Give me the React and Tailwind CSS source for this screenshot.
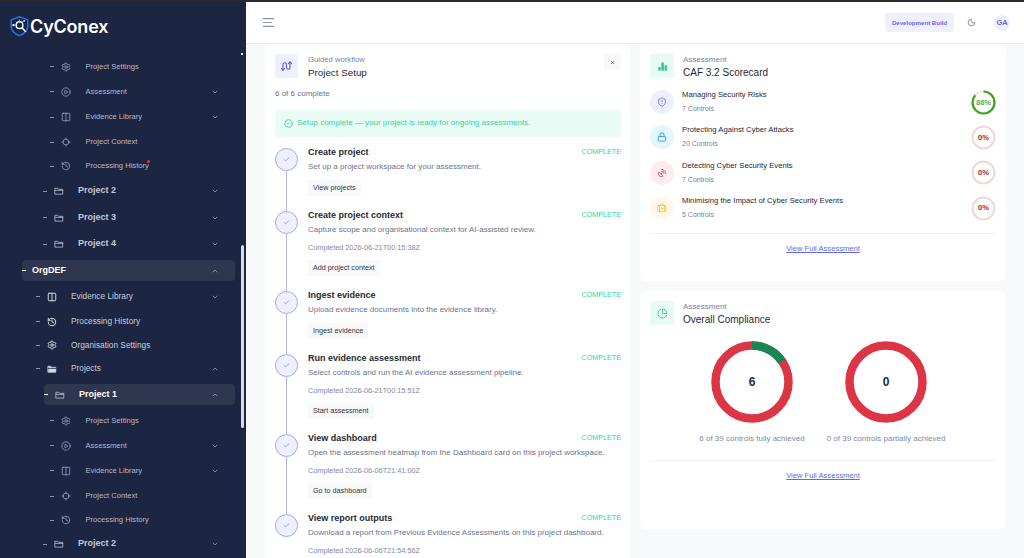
import {
  Check,
  ChevronDown,
  ChevronUp,
  CircleCheck,
  CirclePlay,
  ChartPie,
  Columns2,
  History,
  Locate,
  Lock,
  Moon,
  SatelliteDish,
  Settings,
  ShieldAlert,
  BriefcaseMedical,
  X,
} from "lucide-react";

function FolderIcon({ className, filled }) {
  return (
    <svg viewBox="0 0 24 24" className={className} fill={filled ? "currentColor" : "none"} stroke="currentColor" strokeWidth="2" strokeLinejoin="round" strokeLinecap="round">
      <path d="M3 5.500h6l2 2.500h10v11.500H3z" />
      <path d="M3 10.500h18" stroke={filled ? "#1c2541" : "currentColor"} />
    </svg>
  );
}

function FilledFolder(props) {
  return <FolderIcon {...props} filled />;
}

function BarsIcon({ className }) {
  return (
    <svg viewBox="0 0 24 24" className={className} fill="currentColor">
      <rect x="3" y="13" width="5" height="8" rx="1" />
      <rect x="9.500" y="3" width="5.500" height="18" rx="1" />
      <rect x="16.500" y="9" width="5" height="12" rx="1" />
    </svg>
  );
}

function Logo() {
  return (
    <svg viewBox="0 0 24 24" className="w-[21px] h-[22px] shrink-0" fill="none">
      <path d="M12 1.500 21.500 5v7c0 5.500-4 9-9.500 11C6.500 21 2.500 17.500 2.500 12V5z" fill="#10264f" stroke="#2a6fd8" strokeWidth="1.800" strokeLinejoin="round" />
      <circle cx="12" cy="11" r="3.800" stroke="#fff" strokeWidth="1.600" />
      <path d="m15 14 4 4.500" stroke="#fff" strokeWidth="1.800" />
      <path d="M8 11H5M12 7V4.500M15 8l2-2" stroke="#8fb6f5" strokeWidth="1.200" />
      <circle cx="5" cy="11" r="1.200" fill="#fff" />
      <circle cx="17.500" cy="6" r="1" fill="#cfe0ff" />
    </svg>
  );
}

const levelPad = {
  1: "pl-[36px]",
  2: "pl-[43px]",
  3: "pl-[50px]",
};

function NavRow({ level, icon: Icon, label, chevron, active, dot, height, pill }) {
  const textClass =
    level === 0
      ? "text-[9px] font-bold text-white ml-[6px]"
      : level === 2
        ? `text-[9px] font-bold ml-[12px] ${active ? "text-white" : "text-[#c3c8d6]"}`
        : level === 1
          ? "text-[8.300px] text-[#c9cedb] ml-[12px]"
          : "text-[7.600px] text-[#b5bbcc] ml-[12.500px]";
  const iconClass = level === 1 ? "text-[#d4d8e3]" : "text-[#b5bbcc]";

  return (
    <div className={`flex items-center ${height} ${pill ? "" : levelPad[level]}`}>
      <span className={`w-[4px] h-px ${active || level === 0 ? "bg-white" : "bg-[#8d94aa]"} shrink-0`} />
      {Icon && (
        <span className="ml-[4px] w-[15px] flex justify-center shrink-0">
          <Icon className={`w-[10px] h-[10px] ${iconClass}`} strokeWidth={level === 1 ? 2.400 : 1.600} />
        </span>
      )}
      <span className={`relative whitespace-nowrap ${textClass}`}>
        {label}
        {dot && <span className="absolute -right-[1px] top-0 w-[3px] h-[3px] rounded-full bg-red-500" />}
      </span>
      {chevron && (
        <span className={`ml-auto ${pill ? "pr-[16px]" : "pr-[19px]"}`}>
          {chevron === "up" ? (
            <ChevronUp className="w-[8px] h-[8px] text-[#aeb4c6]" />
          ) : (
            <ChevronDown className="w-[8px] h-[8px] text-[#aeb4c6]" />
          )}
        </span>
      )}
    </div>
  );
}

const steps = [
  { title: "Create project", desc: "Set up a project workspace for your assessment.", action: "View projects" },
  { title: "Create project context", desc: "Capture scope and organisational context for AI-assisted review.", done: "Completed 2026-06-21T00:15:38Z", action: "Add project context" },
  { title: "Ingest evidence", desc: "Upload evidence documents into the evidence library.", action: "Ingest evidence" },
  { title: "Run evidence assessment", desc: "Select controls and run the AI evidence assessment pipeline.", done: "Completed 2026-06-21T00:15:51Z", action: "Start assessment" },
  { title: "View dashboard", desc: "Open the assessment heatmap from the Dashboard card on this project workspace.", done: "Completed 2026-06-06T21:41:00Z", action: "Go to dashboard" },
  { title: "View report outputs", desc: "Download a report from Previous Evidence Assessments on this project dashboard.", done: "Completed 2026-06-06T21:54:56Z" },
];

function Step({ step, last }) {
  return (
    <div className={`flex ${step.done ? "h-[80px]" : "h-[63px]"} shrink-0`}>
      <div className="w-[23px] flex flex-col items-center shrink-0">
        <div className="w-[23px] h-[23px] rounded-full border border-[#a5a8ee] bg-[#eef0fd] flex items-center justify-center shrink-0">
          <Check className="w-[7px] h-[7px] text-[#6366f1]" />
        </div>
        {!last && <div className="w-px flex-1 bg-[#b4b7ef]" />}
      </div>
      <div className="ml-[10px] flex-1 min-w-0">
        <div className="flex justify-between items-start h-[12px] -mt-[2px]">
          <span className="text-[9px] leading-[12px] font-bold text-[#1f2937]">{step.title}</span>
          <span className="text-[7.200px] leading-[12px] text-[#34d3a0]">COMPLETE</span>
        </div>
        <p className="text-[8px] leading-[12px] text-[#6b7390] mt-[3px] whitespace-nowrap">{step.desc}</p>
        {step.done && <p className="text-[7.300px] leading-[10px] text-[#8189a3] mt-[7px]">{step.done}</p>}
        {step.action && (
          <div className={`inline-flex items-center h-[16px] px-[5px] rounded-[2px] bg-[#f8f8f9] text-[7.200px] text-[#303645] ${step.done ? "mt-[6px]" : "mt-[7px]"}`}>
            {step.action}
          </div>
        )}
      </div>
    </div>
  );
}

const domains = [
  { name: "Managing Security Risks", controls: "7 Controls", pct: 86, icon: ShieldAlert, bg: "bg-[#eeeffd]", color: "text-[#6366f1]" },
  { name: "Protecting Against Cyber Attacks", controls: "20 Controls", pct: 0, icon: Lock, bg: "bg-[#e5f5fd]", color: "text-[#1d9bd8]" },
  { name: "Detecting Cyber Security Events", controls: "7 Controls", pct: 0, icon: SatelliteDish, bg: "bg-[#fdecee]", color: "text-[#e2475a]" },
  { name: "Minimising the Impact of Cyber Security Events", controls: "5 Controls", pct: 0, icon: BriefcaseMedical, bg: "bg-[#fff8ea]", color: "text-[#f2c14e]" },
];

function Ring({ pct }) {
  const c = 2 * Math.PI * 11;
  const full = pct > 0;
  return (
    <div className="relative w-[25px] h-[25px] shrink-0">
      <svg viewBox="0 0 25 25" className="w-[25px] h-[25px] -rotate-90">
        <circle cx="12.500" cy="12.500" r="11" fill="none" stroke={full ? "#e3efe0" : "#eed8d6"} strokeWidth="2" />
        {full && (
          <circle cx="12.500" cy="12.500" r="11" fill="none" stroke="#3fa51f" strokeWidth="2.200" strokeDasharray={`${(c * pct) / 100} ${c}`} />
        )}
      </svg>
      <span className={`absolute inset-0 flex items-center justify-center text-[7.500px] font-bold ${full ? "text-[#4caf50]" : "text-[#a3262c]"}`}>
        {pct}%
      </span>
    </div>
  );
}

function Donut({ value, total, label }) {
  const r = 36.500;
  const c = 2 * Math.PI * r;
  return (
    <div className="flex flex-col items-center w-[134px]">
      <div className="relative w-[82px] h-[82px]">
        <svg viewBox="0 0 82 82" className="w-[82px] h-[82px] -rotate-90">
          <circle cx="41" cy="41" r={r} fill="none" stroke="#dc3545" strokeWidth="8.500" />
          {value > 0 && (
            <circle cx="41" cy="41" r={r} fill="none" stroke="#198754" strokeWidth="8.500" strokeDasharray={`${(c * value) / total} ${c}`} />
          )}
        </svg>
        <span className="absolute inset-0 flex items-center justify-center text-[12px] font-bold text-[#1f2937]">{value}</span>
      </div>
      <p className="mt-[10px] text-[8px] leading-[12px] text-[#8189a3] whitespace-nowrap">{label}</p>
    </div>
  );
}

function CardHead({ icon: Icon, eyebrow, title }) {
  return (
    <div className="flex items-start">
      <div className="w-[24px] h-[24px] rounded-[2px] bg-[#e7fbf4] flex items-center justify-center shrink-0">
        <Icon className="w-[11px] h-[11px] text-[#2fc795]" />
      </div>
      <div className="ml-[9px] pt-[1px]">
        <p className="text-[8px] leading-[10px] text-[#7a819b]">{eyebrow}</p>
        <p className="text-[10px] leading-[14px] text-[#1f2937] mt-[0.500px]">{title}</p>
      </div>
    </div>
  );
}

export default function App() {
  return (
    <div className="w-[1024px] h-[558px] overflow-hidden flex flex-col bg-[#f8f9fb] font-['Liberation_Sans',Arial,sans-serif]">
      <div className="h-[2px] bg-[#2b2b2b] shrink-0" />
      <div className="flex flex-1 min-h-0">
        {/* Sidebar */}
        <aside className="w-[246px] bg-[#1c2541] flex flex-col shrink-0">
          <div className="h-[42px] flex items-center pl-[9px] pt-[6px] shrink-0">
            <Logo />
            <span className="text-[18px] font-semibold text-white tracking-[-0.200px] font-['Inter',sans-serif]">CyConex</span>
          </div>
          <div className="flex flex-1 min-h-0">
            <nav className="flex-1 min-w-0 pt-[10px]">
              <NavRow level={3} icon={Settings} label="Project Settings" height="h-[25px]" />
              <NavRow level={3} icon={CirclePlay} label="Assessment" chevron="down" height="h-[25px]" />
              <NavRow level={3} icon={Columns2} label="Evidence Library" chevron="down" height="h-[26px]" />
              <NavRow level={3} icon={Locate} label="Project Context" height="h-[24px]" />
              <NavRow level={3} icon={History} label="Processing History" dot height="h-[24px]" />
              <NavRow level={2} icon={FolderIcon} label="Project 2" chevron="down" height="h-[26px]" />
              <NavRow level={2} icon={FolderIcon} label="Project 3" chevron="down" height="h-[27px]" />
              <NavRow level={2} icon={FolderIcon} label="Project 4" chevron="down" height="h-[26px]" />
              <div className="ml-[22px] mr-[3px] mt-[3px] mb-[3px] rounded-[4px] bg-[#2f3650]">
                <NavRow level={0} label="OrgDEF" chevron="up" pill height="h-[21px]" />
              </div>
              <NavRow level={1} icon={Columns2} label="Evidence Library" chevron="down" height="h-[25px]" />
              <NavRow level={1} icon={History} label="Processing History" height="h-[25px]" />
              <NavRow level={1} icon={Settings} label="Organisation Settings" height="h-[22px]" />
              <NavRow level={1} icon={FilledFolder} label="Projects" chevron="up" height="h-[25px]" />
              <div className="ml-[44px] mr-[3px] mt-[3px] mb-[3px] rounded-[4px] bg-[#2f3650]">
                <NavRow level={2} icon={FolderIcon} label="Project 1" chevron="up" active pill height="h-[21px]" />
              </div>
              <NavRow level={3} icon={Settings} label="Project Settings" height="h-[25px]" />
              <NavRow level={3} icon={CirclePlay} label="Assessment" chevron="down" height="h-[25px]" />
              <NavRow level={3} icon={Columns2} label="Evidence Library" chevron="down" height="h-[25px]" />
              <NavRow level={3} icon={Locate} label="Project Context" height="h-[26px]" />
              <NavRow level={3} icon={History} label="Processing History" height="h-[22px]" />
              <NavRow level={2} icon={FolderIcon} label="Project 2" chevron="down" height="h-[26px]" />
            </nav>
            {/* Scrollbar */}
            <div className="w-[8px] flex flex-col items-center shrink-0">
              <div className="w-[2px] h-[2px] bg-[#e5e7eb] mt-[9px]" />
              <div className="w-[3px] h-[183px] rounded-full bg-[#d9dce4] mt-[190px]" />
            </div>
          </div>
        </aside>

        {/* Main */}
        <div className="flex-1 min-w-0 flex flex-col">
          <header className="h-[42px] bg-white border-b border-[#e8eaee] flex items-center pl-[17px] pr-[14px] shrink-0">
            <svg viewBox="0 0 10 8" className="w-[11px] h-[9px] text-[#8b93a3]" stroke="currentColor" strokeWidth="1">
              <path d="M0 .5h10M0 4h8M0 7.500h10" />
            </svg>
            <div className="ml-auto flex items-center">
              <span className="h-[19px] w-[69px] flex items-center justify-center rounded-[3px] bg-[#eef0fd] text-[6.100px] font-bold text-[#6366f1] whitespace-nowrap">
                Development Build
              </span>
              <Moon className="w-[9px] h-[9px] text-[#6b7280] ml-[13px]" />
              <span className="ml-[18px] w-[16px] h-[16px] rounded-full bg-[#eef0fd] flex items-center justify-center text-[7.500px] font-bold text-[#6366f1]">GA</span>
            </div>
          </header>

          <div className="flex-1 min-h-0 overflow-hidden flex items-start gap-[10px] pl-[19px]">
            {/* Project setup */}
            <section className="w-[365px] h-[520px] bg-white rounded-[6px] pl-[10px] pr-[9px] pt-[10px] shrink-0">
              <div className="flex items-start">
                <div className="w-[23px] h-[24px] rounded-[2px] bg-[#eef0fd] flex items-center justify-center shrink-0">
                  <svg viewBox="0 0 24 24" className="w-[12px] h-[12px] text-[#6366f1]" fill="none" stroke="currentColor" strokeWidth="2.400" strokeLinecap="round" strokeLinejoin="round">
                    <path d="M4 20V9a3.500 3.500 0 0 1 7 0v6a3.500 3.500 0 0 0 7 0V4" />
                    <path d="m15 7 3-3 3 3M1 17l3 3 3-3" />
                  </svg>
                </div>
                <div className="ml-[10px] pt-[1px]">
                  <p className="text-[7.700px] leading-[10px] text-[#7a819b]">Guided workflow</p>
                  <p className="text-[9.800px] leading-[14px] text-[#1f2937] mt-[0.500px]">Project Setup</p>
                </div>
                <div className="ml-auto w-[17px] h-[16px] rounded-[2px] bg-[#f8f8f9] flex items-center justify-center">
                  <X className="w-[5px] h-[5px] text-[#374151]" strokeWidth={3} />
                </div>
              </div>
              <p className="mt-[8px] text-[8px] leading-[12px] text-[#6b7390]">6 of 6 complete</p>
              <div className="mt-[10px] h-[27px] rounded-[3px] bg-[#e9fbf5] flex items-center pl-[9px]">
                <CircleCheck className="w-[9px] h-[9px] text-[#2fc795]" />
                <span className="ml-[4px] text-[8px] text-[#3ad1a0]">Setup complete — your project is ready for ongoing assessments.</span>
              </div>
              <div className="mt-[11px] flex flex-col">
                {steps.map((step, i) => (
                  <Step key={step.title} step={step} last={i === steps.length - 1} />
                ))}
              </div>
            </section>

            <div className="w-[366px] flex flex-col gap-[10px] shrink-0">
              {/* Scorecard */}
              <section className="h-[237px] bg-white rounded-[6px] p-[10px]">
                <CardHead icon={BarsIcon} eyebrow="Assessment" title="CAF 3.2 Scorecard" />
                <div className="mt-[5px] flex flex-col">
                  {domains.map((d) => (
                    <div key={d.name} className="h-[35.300px] flex items-center">
                      <div className={`w-[24px] h-[24px] rounded-full ${d.bg} flex items-center justify-center shrink-0`}>
                        <d.icon className={`w-[10px] h-[10px] ${d.color}`} />
                      </div>
                      <div className="ml-[8px]">
                        <p className="text-[7.700px] leading-[10px] text-[#1f2937]">{d.name}</p>
                        <p className="text-[7px] leading-[10px] text-[#7a819b] mt-[4px]">{d.controls}</p>
                      </div>
                      <div className="ml-auto">
                        <Ring pct={d.pct} />
                      </div>
                    </div>
                  ))}
                </div>
                <div className="mt-[7px] border-t border-[#eef0f3] pt-[6px] text-center leading-[12px]">
                  <a className="text-[7.600px] leading-[12px] text-[#6366f1] underline">View Full Assessment</a>
                </div>
              </section>

              {/* Compliance */}
              <section className="h-[238px] bg-white rounded-[6px] p-[10px]">
                <CardHead icon={ChartPie} eyebrow="Assessment" title="Overall Compliance" />
                <div className="mt-[14px] flex justify-center pr-[8px]">
                  <Donut value={6} total={39} label="6 of 39 controls fully achieved" />
                  <Donut value={0} total={39} label="0 of 39 controls partially achieved" />
                </div>
                <div className="mt-[15px] border-t border-[#eef0f3] pt-[6px] text-center leading-[12px]">
                  <a className="text-[7.600px] leading-[12px] text-[#6366f1] underline">View Full Assessment</a>
                </div>
              </section>
            </div>
          </div>
        </div>
      </div>
    </div>
  );
}
